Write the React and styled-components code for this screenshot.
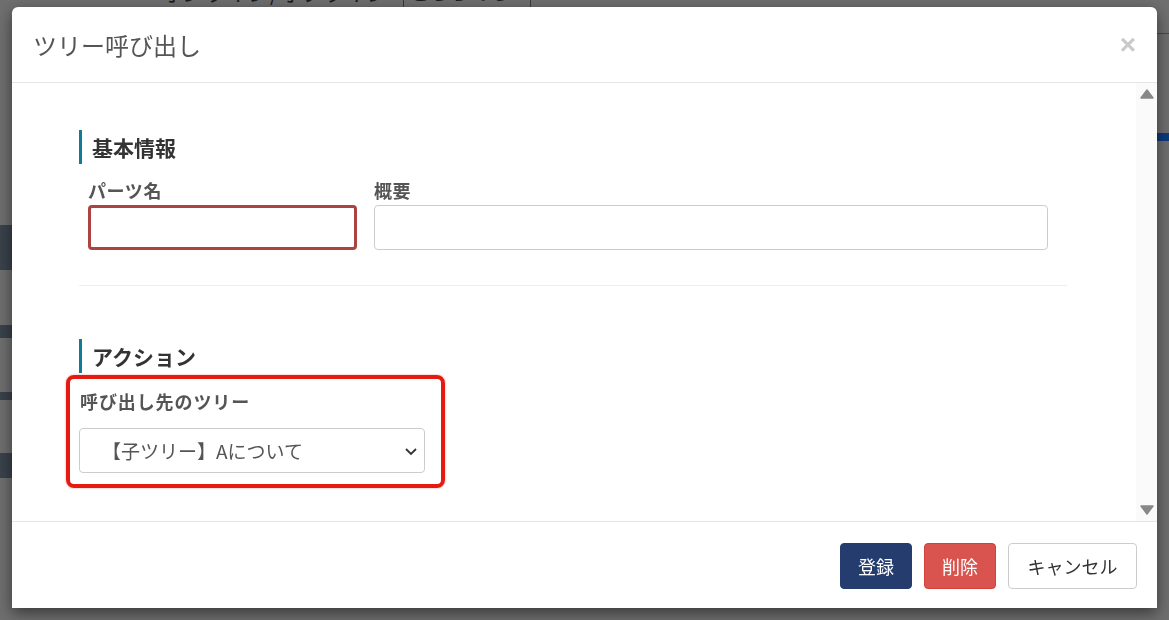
import React from 'react';
import styled, { createGlobalStyle } from 'styled-components';

const GlobalStyle = createGlobalStyle`
    html, body {
        margin: 0;
        padding: 0;
        overflow: hidden;
    }
    body {
        font-family: "Noto Sans CJK JP", "Noto Sans", sans-serif;
        background: #6f6f6f;
    }
`

const FONT = `"Noto Sans CJK JP", "Noto Sans", sans-serif`;

// dimmed page behind the modal
const Backdrop = styled.div`
    position: fixed;
    inset: 0;
    background: #6f6f6f;
    display: grid;
    grid-template-columns: 12px 1fr 12px;
    grid-template-rows: 7px 1fr;
    overflow: hidden;
`

const TopFilter = styled.div`
    grid-column: 1 / 4;
    display: flex;
    align-items: flex-end;
    gap: 14px;
    padding-left: 160px;
    margin-top: -24px;
    height: 31px;
    font-family: ${FONT};
    font-size: 22px;
    line-height: 31px;
    color: #1c1c1c;
    white-space: nowrap;
`

const FakeSelect = styled.div`
    border-left: 1px solid #3a3a3a;
    border-right: 1px solid #3a3a3a;
    padding: 0 6px;
    font-size: 20px;
`

const SideColumn = styled.div`
    display: flex;
    flex-direction: column;
`

const SideBlock = styled.div`
    height: ${props => props.$h}px;
    flex-shrink: 0;
    background: ${props => props.$color || 'transparent'};
`

const Modal = styled.div`
    position: absolute;
    left: 12px;
    top: 7px;
    width: 1145px;
    height: 601px;
    background: #fff;
    border-radius: 6px 6px 0 0;
    box-shadow: 0 5px 15px rgba(0, 0, 0, 0.5);
    display: flex;
    flex-direction: column;
    font-family: ${FONT};
`

const Header = styled.div`
    height: 76px;
    box-sizing: border-box;
    border-bottom: 1px solid #e5e5e5;
    display: flex;
    align-items: center;
    justify-content: space-between;
    padding: 0 21px 0 21px;
`

const Title = styled.h4`
    margin: 0;
    font-size: 24px;
    font-weight: 400;
    color: #555;
`

const Close = styled.button`
    border: none;
    background: none;
    padding: 0;
    color: #c9c9c9;
    font-size: 28px;
    font-weight: 700;
    line-height: 1;
    font-family: "Liberation Sans", sans-serif;
    cursor: pointer;
`

const BodyWrap = styled.div`
    flex: 1;
    display: flex;
    min-height: 0;
    border-bottom: 1px solid #e5e5e5;
`

const Body = styled.div`
    flex: 1;
    padding: 47px 69px 0 67px;
`

const ScrollTrack = styled.div`
    width: 21px;
    background: #fafafa;
    display: flex;
    flex-direction: column;
    justify-content: space-between;
    align-items: center;
    padding: 6px 0 6px;
`

const SectionTitle = styled.h3`
    margin: 0;
    border-left: 3px solid #0f7c95;
    padding-left: 10px;
    height: 34px;
    line-height: 34px;
    font-size: 21px;
    font-weight: 700;
    color: #333;
`

const FieldRow = styled.div`
    display: grid;
    grid-template-columns: 269px 674px;
    gap: 17px;
    padding-left: 9px;
    margin-top: 13px;
`

const Field = styled.div`
    display: flex;
    flex-direction: column;
`

const Label = styled.label`
    font-size: 18px;
    font-weight: 700;
    color: #555;
    line-height: 26px;
    margin-bottom: 2px;
    letter-spacing: 0.6px;
`

const Input = styled.input`
    height: 45px;
    box-sizing: border-box;
    border: ${props => props.$error ? '3px solid #ab4343' : '1px solid #ccc'};
    border-radius: 4px;
    font-family: ${FONT};
    font-size: 18px;
    padding: 0 12px;
    outline: none;
`

const Divider = styled.hr`
    border: none;
    border-top: 1px solid #eee;
    margin: 35px 0 53px;
`

const Highlight = styled.div`
    margin: 2px 0 0 -13px;
    width: 379px;
    box-sizing: border-box;
    border: 4px solid #e31b10;
    border-radius: 8px;
    box-shadow: 0 0 2px rgba(227, 27, 16, 0.5);
    padding: 9px 16px 11px 9px;
`

const HighlightLabel = styled(Label)`
    display: block;
    padding-left: 1px;
    margin-bottom: 14px;
    letter-spacing: 0.9px;
`

const SelectBox = styled.div`
    position: relative;
    height: 45px;
`

const Select = styled.select`
    width: 100%;
    height: 45px;
    appearance: none;
    border: 1px solid #ccc;
    border-radius: 4px;
    background: #fff;
    font-family: ${FONT};
    font-size: 19px;
    color: #555;
    padding: 0 30px 0 22px;
    outline: none;
`

const Chevron = styled.svg`
    position: absolute;
    right: 7px;
    top: 19px;
    pointer-events: none;
`

const Footer = styled.div`
    height: 85px;
    display: flex;
    justify-content: flex-end;
    align-items: center;
    gap: 12px;
    padding: 1px 20px 0 0;
`

const Button = styled.button`
    height: 46px;
    width: ${props => props.$w}px;
    padding: 0;
    border-radius: 4px;
    font-family: ${FONT};
    font-size: 18px;
    border: 1px solid ${props => props.$border};
    background: ${props => props.$bg};
    color: ${props => props.$color};
    cursor: pointer;
`

const sideBlocks = [
    { h: 218 },
    { h: 45, color: '#3a424b' },
    { h: 55 },
    { h: 13, color: '#3a424b' },
    { h: 54 },
    { h: 8, color: '#3a424b' },
    { h: 53 },
    { h: 25, color: '#3a424b' },
];

const rightBlocks = [
    { h: 26 },
    { h: 1, color: '#4a4a4a' },
    { h: 99 },
    { h: 8, color: '#0c3a7c' },
];

const Triangle = ({ down }) => (
    <svg width="14" height="10" viewBox="0 0 14 10">
        <path d={down ? 'M1 1 H13 L7 9 Z' : 'M1 9 H13 L7 1 Z'} fill="#888" stroke="#888" strokeLinejoin="round" strokeWidth="1.5" />
    </svg>
)

export default function App() {
    return (
        <>
            <GlobalStyle />
            <Backdrop>
                <TopFilter>
                    <span>オンライン/オフライン</span>
                    <FakeSelect>どちらでも ▾</FakeSelect>
                </TopFilter>
                <SideColumn>
                    {sideBlocks.map((b, i) => <SideBlock key={i} $h={b.h} $color={b.color} />)}
                </SideColumn>
                <div />
                <SideColumn>
                    {rightBlocks.map((b, i) => <SideBlock key={i} $h={b.h} $color={b.color} />)}
                </SideColumn>
            </Backdrop>
            <Modal>
                <Header>
                    <Title>ツリー呼び出し</Title>
                    <Close>×</Close>
                </Header>
                <BodyWrap>
                    <Body>
                        <SectionTitle>基本情報</SectionTitle>
                        <FieldRow>
                            <Field>
                                <Label>パーツ名</Label>
                                <Input $error />
                            </Field>
                            <Field>
                                <Label>概要</Label>
                                <Input />
                            </Field>
                        </FieldRow>
                        <Divider />
                        <SectionTitle>アクション</SectionTitle>
                        <Highlight>
                            <HighlightLabel>呼び出し先のツリー</HighlightLabel>
                            <SelectBox>
                                <Select defaultValue="a">
                                    <option value="a">【子ツリー】Aについて</option>
                                </Select>
                                <Chevron width="14" height="9" viewBox="0 0 14 9">
                                    <path d="M2 2 L7 7 L12 2" fill="none" stroke="#333" strokeWidth="1.8" />
                                </Chevron>
                            </SelectBox>
                        </Highlight>
                    </Body>
                    <ScrollTrack>
                        <Triangle />
                        <Triangle down />
                    </ScrollTrack>
                </BodyWrap>
                <Footer>
                    <Button $w={72} $bg="#253c6e" $border="#253c6e" $color="#fff">登録</Button>
                    <Button $w={72} $bg="#d9534f" $border="#d43f3a" $color="#fff">削除</Button>
                    <Button $w={129} $bg="#fff" $border="#ccc" $color="#333">キャンセル</Button>
                </Footer>
            </Modal>
        </>
    )
}
